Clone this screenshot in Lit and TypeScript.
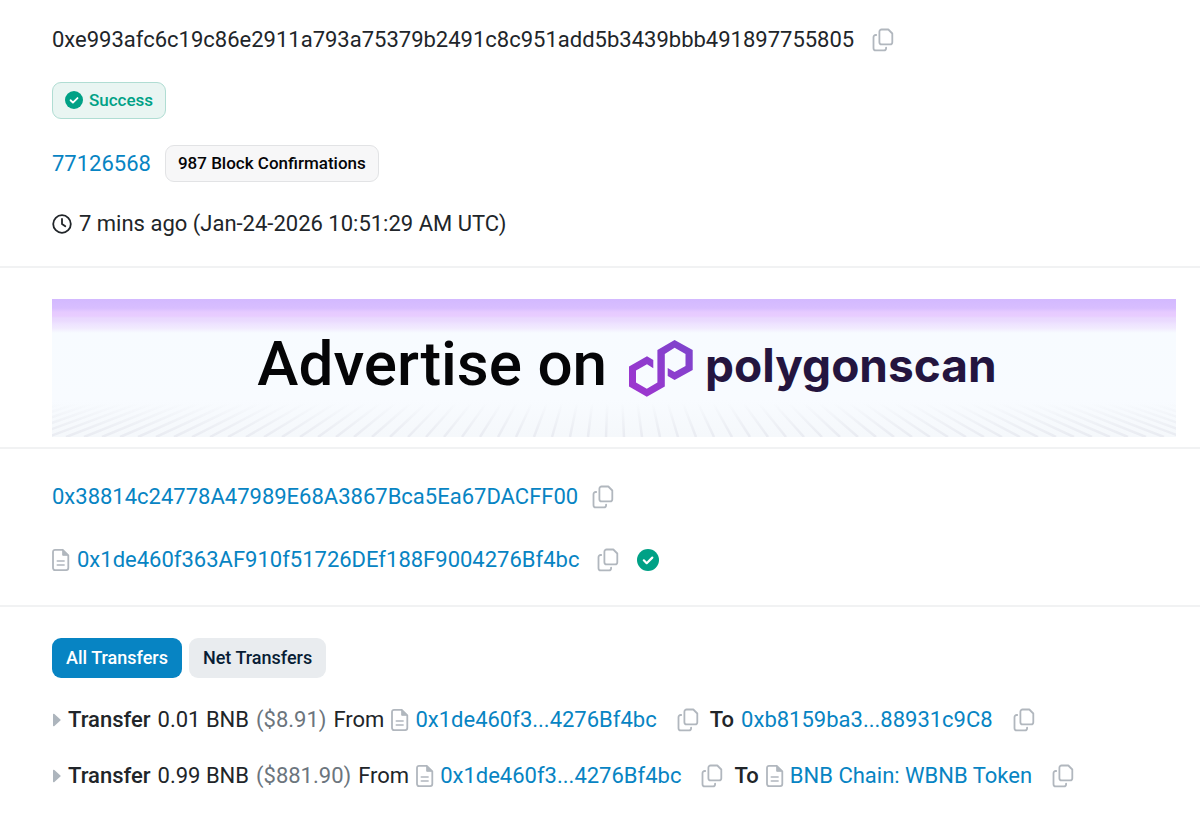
import { LitElement, html, svg, css, nothing } from "lit";
import { customElement, property, state } from "lit/decorators.js";

const copyIcon = html`<svg viewBox="0 0 22 24" width="22" height="24" fill="none" stroke="#b1b7be" stroke-width="1.8" stroke-linejoin="round" stroke-linecap="round" aria-hidden="true">
  <path d="M9.6 1.5h6.7l4 4v8.700a2.200 2.200 0 0 1-2.200 2.200H9.600a2.200 2.200 0 0 1-2.200-2.200V3.700a2.200 2.200 0 0 1 2.200-2.200z"></path>
  <path d="M4.200 7H3.700a2.200 2.200 0 0 0-2.200 2.200v11a2.200 2.200 0 0 0 2.200 2.200h8.200a2.200 2.200 0 0 0 2.200-2.200v-.6"></path>
</svg>`;

const fileIcon = html`<svg viewBox="0 0 18 24" width="18" height="24" fill="none" stroke="#b1b7be" stroke-width="1.8" stroke-linejoin="round" stroke-linecap="round" aria-hidden="true">
  <path d="M3 1.900h7.700l5.600 5.400v12.800a2 2 0 0 1-2 2H3a2 2 0 0 1-2-2V3.900a2 2 0 0 1 2-2z"></path>
  <path d="M10.700 2v5.300h5.400z" fill="#b1b7be" stroke-width="1"></path>
  <path d="M5.300 13h6.800M5.300 17h6.800" stroke-width="1.600"></path>
</svg>`;

const clockIcon = html`<svg viewBox="0 0 20 20" width="20" height="20" fill="none" stroke="#212529" stroke-width="1.800" stroke-linecap="round" stroke-linejoin="round" aria-hidden="true">
  <circle cx="10" cy="10" r="8.800"></circle>
  <path d="M10 5v5l3.300 2.300"></path>
</svg>`;

const checkIcon = (size: number) => html`<svg viewBox="0 0 22 22" width=${size} height=${size} aria-hidden="true">
  <circle cx="11" cy="11" r="11" fill="#00a186"></circle>
  <path d="M6.800 11.300l2.900 2.900 5.600-5.600" fill="none" stroke="#fff" stroke-width="2.200" stroke-linecap="round" stroke-linejoin="round"></path>
</svg>`;

const polygonLogo = html`<svg viewBox="0 0 64 57" width="64" height="57" aria-hidden="true">
  <defs>
    <linearGradient id="mark" x1="0" y1="1" x2="1" y2="0">
      <stop offset="0" stop-color="#a034cf"></stop>
      <stop offset="1" stop-color="#7c45cc"></stop>
    </linearGradient>
  </defs>
  <path d="M17.800 56.700L0 46.500V26.500L18 16.300 24.300 20V28.300L18 24.200 7 30.500V42.500L17.800 48.800 28.400 42.500V10L45.600 0 63.700 10V30L45.600 40 38.700 36V28L45.600 32 56.500 26V14L45.600 7.800 35.800 14V46.500Z" fill="url(#mark)"></path>
</svg>`;

@customElement("copy-button")
class CopyButton extends LitElement {
  @property() value = "";

  static styles = css`
    :host { display: inline-flex; }
    .copy { display: flex; padding: 0; border: 0; background: none; cursor: pointer; }
  `;

  private copy() {
    navigator.clipboard?.writeText(this.value);
  }

  render() {
    return html`<button class="copy" type="button" aria-label="Copy" @click=${this.copy}>${copyIcon}</button>`;
  }
}

@customElement("ad-banner")
class AdBanner extends LitElement {
  static styles = css`
    :host { display: block; }
    .banner {
      display: grid;
      height: 138px;
      text-decoration: none;
      overflow: hidden;
      background: linear-gradient(#d3b9ff 0, #d8beff 9px, #e6caff 13px, #e8ccff 17px, #e9d8fe 19px, #eadafe 22px, #eee3ff 25px, #f1eafe 29px, #f7fbff 34px, #f8fbff 100px, #f5f8fb 138px);
    }
    .floor { grid-area: 1 / 1; width: 100%; height: 138px; }
    .message {
      grid-area: 1 / 1;
      display: flex;
      justify-content: center;
      align-items: center;
      padding-left: 26px;
      white-space: nowrap;
    }
    .lead { font: 500 62px/72px Roboto, sans-serif; color: #050507; padding-bottom: 8px; }
    .logo { display: flex; margin: 0 12px 0 22px; }
    .name { font: 700 46px/60px Inter, sans-serif; color: #24153f; padding-bottom: 6px; }
  `;

  private floorLines() {
    const lines = [];
    for (let near = -130; near <= 1260; near += 18) {
      const far = near + (562 - near) * 0.16;
      lines.push(svg`<path d="M${far} 104L${near} 138"></path>`);
    }
    return lines;
  }

  render() {
    return html`<a class="banner" href="#advertise">
      <svg class="floor" viewBox="0 0 1124 138" preserveAspectRatio="none" aria-hidden="true">
        <defs>
          <linearGradient id="fade" gradientUnits="userSpaceOnUse" x1="0" y1="104" x2="0" y2="138">
            <stop offset="0" stop-color="#e6e8ee" stop-opacity="0"></stop>
            <stop offset="1" stop-color="#e6e8ef" stop-opacity="0.800"></stop>
          </linearGradient>
        </defs>
        <g stroke="url(#fade)" stroke-width="2.500">${this.floorLines()}</g>
      </svg>
      <span class="message">
        <span class="lead">Advertise on</span>
        <span class="logo">${polygonLogo}</span>
        <span class="name">polygonscan</span>
      </span>
    </a>`;
  }
}

interface Party {
  label: string;
  contract: boolean;
}

interface Transfer {
  amount: string;
  fiat: string;
  from: Party;
  to: Party;
}

const transfers: Transfer[] = [
  {
    amount: "0.01 BNB",
    fiat: "($8.91)",
    from: { label: "0x1de460f3...4276Bf4bc", contract: true },
    to: { label: "0xb8159ba3...88931c9C8", contract: false },
  },
  {
    amount: "0.99 BNB",
    fiat: "($881.90)",
    from: { label: "0x1de460f3...4276Bf4bc", contract: true },
    to: { label: "BNB Chain: WBNB Token", contract: true },
  },
];

@customElement("app-root")
class AppRoot extends LitElement {
  @state() private tab = "All Transfers";

  static styles = css`
    :host {
      display: block;
      min-height: 100vh;
      background: #fff;
      color: #212529;
      font: 400 22px/32px Roboto, sans-serif;
    }
    svg { display: block; flex: none; }
    a { color: #0784c3; text-decoration: none; }
    .section { padding: 0 24px 0 52px; border-bottom: 2px solid #f1f2f3; }
    .section:last-child { border-bottom: 0; }
    .overview { display: flex; flex-direction: column; gap: 26px; padding-top: 24px; padding-bottom: 26px; }
    .ad { padding-top: 31px; padding-bottom: 10px; }
    .parties { display: flex; flex-direction: column; gap: 31px; padding-top: 32px; padding-bottom: 29px; }
    .actions { padding-top: 31px; padding-bottom: 20px; }
    .row { display: flex; align-items: center; white-space: nowrap; }
    .wide { gap: 18px; }
    .medium { gap: 14px; }
    .tight { gap: 7px; }
    .badge {
      display: flex;
      align-items: center;
      gap: 6px;
      box-sizing: border-box;
      height: 37px;
      padding: 0 12px 1px;
      border: 1px solid #e2e3e5;
      border-radius: 9px;
      background: #f7f7f8;
      color: #050507;
      font-size: 17px;
      font-weight: 500;
    }
    .success { border-color: #b0ddd3; background: #e9f5f2; color: #00a186; }
    .tabs { display: flex; gap: 7px; }
    .tab {
      height: 40px;
      padding: 0 14px;
      border: 0;
      border-radius: 9px;
      background: #e9ecef;
      color: #081d35;
      font: 500 18px/24px Roboto, sans-serif;
      cursor: pointer;
    }
    .selected { background: #0784c3; color: #fff; }
    .transfers { display: flex; flex-direction: column; gap: 24px; margin: 26px 0 0; padding: 0; list-style: none; }
    .caret { margin-left: 1px; }
    .strong { font-weight: 500; }
    .fiat { color: #6c757d; }
    .party { display: flex; align-items: center; gap: 6px; }
    .party copy-button { margin-left: 14px; margin-right: 4px; }
  `;

  private party(p: Party) {
    return html`<span class="party">
      ${p.contract ? fileIcon : nothing}<a href="#address">${p.label}</a><copy-button .value=${p.label}></copy-button>
    </span>`;
  }

  render() {
    const hash = "0xe993afc6c19c86e2911a793a75379b2491c8c951add5b3439bbb491897755805";
    const sender = "0x38814c24778A47989E68A3867Bca5Ea67DACFF00";
    const contract = "0x1de460f363AF910f51726DEf188F9004276Bf4bc";
    return html`
      <section class="section overview">
        <div class="row wide"><span>${hash}</span><copy-button .value=${hash}></copy-button></div>
        <div class="row"><span class="badge success">${checkIcon(18)}Success</span></div>
        <div class="row medium"><a href="#block">77126568</a><span class="badge">987 Block Confirmations</span></div>
        <div class="row tight">${clockIcon}<span>7 mins ago (Jan-24-2026 10:51:29 AM UTC)</span></div>
      </section>
      <section class="section ad"><ad-banner></ad-banner></section>
      <section class="section parties">
        <div class="row medium"><a href="#from">${sender}</a><copy-button .value=${sender}></copy-button></div>
        <div class="row wide">
          <span class="row tight">${fileIcon}<a href="#to">${contract}</a></span>
          <copy-button .value=${contract}></copy-button>
          ${checkIcon(22)}
        </div>
      </section>
      <section class="section actions">
        <div class="tabs">
          ${["All Transfers", "Net Transfers"].map(
            (t) => html`<button type="button" class="tab ${t === this.tab ? "selected" : ""}" @click=${() => (this.tab = t)}>${t}</button>`,
          )}
        </div>
        <ul class="transfers">
          ${transfers.map(
            (t) => html`<li class="row tight">
              <svg class="caret" viewBox="0 0 8 14" width="8" height="14" aria-hidden="true"><path d="M0 1.500v11a.8.8 0 0 0 1.400.5l6-5.400a.8.8 0 0 0 0-1.200l-6-5.400A.8.8 0 0 0 0 1.500z" fill="#adb5bd"></path></svg>
              <span class="strong">Transfer</span>
              <span>${t.amount}</span>
              <span class="fiat">${t.fiat}</span>
              <span>From</span>
              ${this.party(t.from)}
              <span class="strong">To</span>
              ${this.party(t.to)}
            </li>`,
          )}
        </ul>
      </section>
    `;
  }
}
